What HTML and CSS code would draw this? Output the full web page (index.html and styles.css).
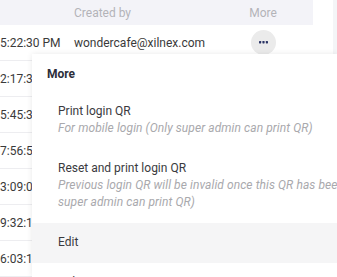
FILE: index.html
```html
<!DOCTYPE html>
<html>
<head>
<meta charset="utf-8">
<link rel="stylesheet" href="styles.css">
</head>
<body>
<div class="page">
  <div class="table">
    <div class="row head">
      <div class="c-time"></div>
      <div class="c-email">Created by</div>
      <div class="c-more">More</div>
    </div>
    <div class="row">
      <div class="c-time">5:22:30 PM</div>
      <div class="c-email">wondercafe@xilnex.com</div>
      <div class="c-more"><span class="dots"><svg width="9" height="3" viewBox="0 0 9 3"><rect x="0" y="0" width="2.2" height="2.4" rx="0.6" fill="#2b3566"/><rect x="3.4" y="0" width="2.2" height="2.4" rx="0.6" fill="#2b3566"/><rect x="6.8" y="0" width="2.2" height="2.4" rx="0.6" fill="#2b3566"/></svg></span></div>
    </div>
    <div class="row"><div class="c-time">2:17:34 PM</div><div class="c-email">wondercafe@xilnex.com</div><div class="c-more"></div></div>
    <div class="row"><div class="c-time">5:45:31 PM</div><div class="c-email">wondercafe@xilnex.com</div><div class="c-more"></div></div>
    <div class="row"><div class="c-time">7:56:52 PM</div><div class="c-email">wondercafe@xilnex.com</div><div class="c-more"></div></div>
    <div class="row"><div class="c-time">3:09:05 PM</div><div class="c-email">wondercafe@xilnex.com</div><div class="c-more"></div></div>
    <div class="row"><div class="c-time">9:32:17 PM</div><div class="c-email">wondercafe@xilnex.com</div><div class="c-more"></div></div>
    <div class="row"><div class="c-time">6:03:18 PM</div><div class="c-email">wondercafe@xilnex.com</div><div class="c-more"></div></div>
  </div>
  <div class="side"></div>
</div>
<div class="menu">
  <div class="menu-title">More</div>
  <div class="item">
    <div class="item-title">Print login QR</div>
    <div class="item-sub">For mobile login (Only super admin can print QR)</div>
  </div>
  <div class="item">
    <div class="item-title">Reset and print login QR</div>
    <div class="item-sub">Previous login QR will be invalid once this QR has been printed (Only super admin can print QR)</div>
  </div>
  <div class="item hover">
    <div class="item-title">Edit</div>
  </div>
  <div class="item">
    <div class="item-title">Delete</div>
  </div>
</div>
</body>
</html>
```

FILE: styles.css
```css
html, body {
  margin: 0;
  padding: 0;
  background: #ffffff;
  overflow: hidden;
  font-family: Roboto, "Liberation Sans", sans-serif;
  font-size: 12px;
  color: #3a3a3a;
}
.page {
  display: flex;
  gap: 20px;
  width: 337px;
  height: 277px;
}
.table {
  width: 313px;
  flex: none;
}
.side {
  flex: 1;
  background: #f4f5f7;
}
.row {
  display: grid;
  grid-template-columns: 74px 164px 50px;
  align-items: center;
  height: 35px;
  border-bottom: 1px solid #ededf0;
  white-space: nowrap;
}
.row.head {
  height: 25px;
  border-bottom: none;
  background: #f3f3f8;
  color: #b3b3b8;
}
.c-time { overflow: hidden; }
.c-more {
  display: flex;
  justify-content: center;
}
.dots {
  width: 25px;
  height: 25px;
  border-radius: 50%;
  background: #ebebeb;
  display: flex;
  align-items: center;
  justify-content: center;
}
.dots svg { display: block; }
.menu {
  position: absolute;
  left: 32px;
  top: 54px;
  width: 305px;
  height: 223px;
  overflow: hidden;
  background: #ffffff;
  box-shadow: 0 0 6px rgba(0, 0, 0, 0.09);
}
.menu-title {
  padding: 12px 15px 9px;
  line-height: 17px;
  font-weight: 700;
  color: #2d2e3a;
}
.item {
  padding: 11px 0 12px 26px;
  line-height: 17px;
}
.item.hover {
  background: #f5f5f6;
}
.item-title {
  color: #3a3a3e;
}
.item-sub {
  color: #a9a9ad;
  font-style: italic;
  letter-spacing: 0.08px;
  width: 380px;
}
```
